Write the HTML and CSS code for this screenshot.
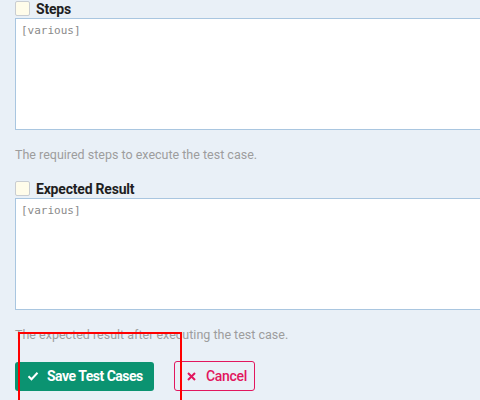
FILE: index.html
```html
<!DOCTYPE html>
<html>
<head>
<meta charset="utf-8">
<link rel="stylesheet" href="styles.css">
</head>
<body>
<div class="form">
  <div class="field">
    <div class="label-row"><span class="checkbox"></span><span class="label">Steps</span></div>
    <div class="textarea">[various]</div>
    <div class="help">The required steps to execute the test case.</div>
  </div>
  <div class="field">
    <div class="label-row"><span class="checkbox"></span><span class="label">Expected Result</span></div>
    <div class="textarea">[various]</div>
    <div class="help">The expected result after executing the test case.</div>
  </div>
  <div class="actions">
    <button class="btn btn-save">
      <svg width="12" height="10" viewBox="0 0 12 10"><path d="M1.5 5.2 L4.5 8.2 L10.5 1.8" fill="none" stroke="#fff" stroke-width="2"/></svg>
      <span>Save Test Cases</span>
    </button>
    <button class="btn btn-cancel">
      <svg width="9" height="9" viewBox="0 0 9 9"><path d="M1 1 L8 8 M8 1 L1 8" fill="none" stroke="#e2165e" stroke-width="2"/></svg>
      <span>Cancel</span>
    </button>
  </div>
</div>
<div class="highlight"></div>
</body>
</html>
```
FILE: styles.css
```css
html, body {
  margin: 0;
  padding: 0;
  background: #e9f0f7;
  overflow: hidden;
}
body {
  font-family: Roboto, "Liberation Sans", sans-serif;
  width: 480px;
  height: 400px;
  position: relative;
}
.form {
  padding-left: 15px;
  margin-top: -1px;
  display: flex;
  flex-direction: column;
}
.field {
  display: flex;
  flex-direction: column;
  margin-bottom: 16px;
}
.field + .field {
  margin-top: -1px;
}
.label-row {
  display: flex;
  align-items: center;
  gap: 6px;
  height: 19px;
}
.checkbox {
  width: 13px;
  height: 13px;
  background: #fffcea;
  border: 1px solid #c9cdd2;
  border-radius: 2px;
}
.label {
  font-weight: 700;
  font-size: 14px;
  color: #1f1f1f;
  letter-spacing: -0.2px;
}
.textarea {
  box-sizing: border-box;
  width: 480px;
  height: 112px;
  background: #fff;
  border: 1px solid #a9c6e0;
  padding: 4px 5px;
  font-family: "DejaVu Sans Mono", monospace;
  font-size: 11px;
  line-height: 16px;
  color: #8a8a8a;
}
.help {
  margin-top: 16px;
  font-size: 12.5px;
  line-height: 18px;
  color: #9d9d9d;
}
.actions {
  margin-top: 1px;
  display: flex;
  gap: 20px;
  align-items: center;
}
.btn {
  display: flex;
  align-items: center;
  justify-content: flex-start;
  white-space: nowrap;
  height: 29px;
  border-radius: 3px;
  font-family: Roboto, "Liberation Sans", sans-serif;
  font-size: 14px;
  font-weight: 700;
  box-sizing: border-box;
}
.btn-save {
  background: #0b9371;
  color: #fff;
  border: none;
  width: 139px;
  padding: 0 0 0 12px;
  gap: 8px;
  letter-spacing: -0.5px;
}
.btn-save svg {
  flex: none;
}
.btn-cancel {
  background: transparent;
  color: #e2165e;
  border: 1px solid #e2165e;
  font-weight: 500;
  width: 81px;
  height: 30px;
  padding: 0 0 0 12px;
  gap: 10px;
  letter-spacing: -0.3px;
}
.highlight {
  position: absolute;
  left: 18px;
  top: 332px;
  width: 160px;
  height: 80px;
  border: 2px solid #ff0000;
}
```
